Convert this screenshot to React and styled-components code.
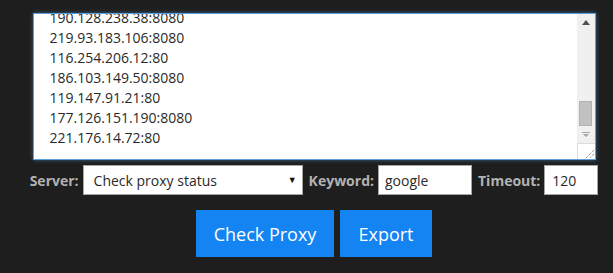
import React, { useLayoutEffect, useRef } from 'react'
import styled, { createGlobalStyle } from 'styled-components'

const GlobalStyle = createGlobalStyle`
html, body {
  margin: 0;
  padding: 0;
  background: #1e1e1e;
}
body {
  font-family: "Open Sans", "Liberation Sans", sans-serif;
}
`

const proxies = [
  '103.21.150.184:8080',
  '185.46.212.97:3128',
  '41.78.243.189:53281',
  '200.29.109.112:8080',
  '91.205.174.26:80',
  '118.99.102.33:8080',
  '94.177.246.23:3128',
  '5.189.133.231:80',
  '200.89.178.215:8080',
  '112.78.164.54:8080',
  '45.55.23.78:8080',
  '137.74.254.242:3128',
  '181.112.34.222:8080',
  '36.67.27.189:8080',
  '78.137.60.42:80',
  '201.16.140.91:8080',
  '62.210.77.120:3128',
  '104.131.60.5:80',
  '190.128.238.38:8080',
  '219.93.183.106:8080',
  '116.254.206.12:80',
  '186.103.149.50:8080',
  '119.147.91.21:80',
  '177.126.151.190:8080',
  '221.176.14.72:80',
]

const Page = styled.div`
  width: 613px;
  height: 273px;
  box-sizing: border-box;
  padding: 13px 0 0 15px;
  display: flex;
  flex-direction: column;
  align-items: center;
`

const Editor = styled.div`
  width: 563px;
  height: 147px;
  box-sizing: border-box;
  display: flex;
  background: #fff;
  border: 1px solid #5d9fd8;
  box-shadow: 0 0 4px rgba(82, 160, 230, 0.55);
`

const ListArea = styled.textarea`
  flex: 1;
  min-width: 0;
  height: 100%;
  box-sizing: border-box;
  margin: 0;
  border: none;
  outline: none;
  resize: none;
  padding: 0 16px 11px 16px;
  font-family: "Open Sans", "Liberation Sans", sans-serif;
  font-size: 14px;
  line-height: 20px;
  color: #2a2a2a;
  background: #fff;
  overflow: hidden;
  scrollbar-width: none;
  caret-color: #000;
`

const ScrollBar = styled.div`
  width: 18px;
  display: flex;
  flex-direction: column;
  background: #f0f0f0;
`

const ArrowButton = styled.div`
  height: 17px;
  display: flex;
  align-items: center;
  justify-content: center;
`

const Track = styled.div`
  flex: 1;
  display: flex;
  flex-direction: column;
  justify-content: flex-end;
  align-items: center;
`

const Thumb = styled.div`
  width: 11px;
  height: 23px;
  background: #c1c1c1;
  border: 1px solid #b3b3b3;
`

const Grip = styled.div`
  height: 16px;
  box-sizing: border-box;
  background: #fff;
  border-top: 1px solid #dcdcdc;
  border-left: 1px solid #dcdcdc;
  display: flex;
  align-items: flex-end;
  justify-content: flex-end;
`

const Controls = styled.div`
  margin-top: 5px;
  display: flex;
  align-items: center;
  justify-content: center;
  height: 30px;
`

const Label = styled.label`
  font-size: 14px;
  font-weight: 700;
  color: #b2b2b2;
  margin: 0 4px 0 ${p => p.$first ? 0 : 6}px;
  white-space: nowrap;
`

const SelectWrap = styled.div`
  position: relative;
  width: 220px;
  height: 30px;

  &::after {
    content: '▼';
    position: absolute;
    right: 6px;
    top: 8px;
    font-size: 9px;
    color: #111;
    pointer-events: none;
  }
`

const Select = styled.select`
  appearance: none;
  width: 100%;
  height: 100%;
  box-sizing: border-box;
  margin: 0;
  border: 1px solid #a6a6a6;
  border-radius: 0;
  background: #fff;
  padding: 0 0 0 10px;
  font-family: "Open Sans", "Liberation Sans", sans-serif;
  font-size: 14px;
  color: #2a2a2a;
  outline: none;
`

const Field = styled.input`
  width: ${p => p.$width}px;
  height: 30px;
  box-sizing: border-box;
  margin: 0;
  border: 1px solid #a6a6a6;
  border-radius: 0;
  padding: 0 0 0 ${p => p.$pad}px;
  font-family: "Open Sans", "Liberation Sans", sans-serif;
  font-size: 14px;
  color: #2a2a2a;
  background: #fff;
  outline: none;
`

const Buttons = styled.div`
  margin-top: 15px;
  display: flex;
  gap: 6px;
`

const Button = styled.button`
  width: ${p => p.$width}px;
  height: 47px;
  padding: 0;
  border: none;
  border-radius: 0;
  background: #1384f1;
  color: #fff;
  font-family: "Open Sans", "Liberation Sans", sans-serif;
  font-size: 18px;
  cursor: pointer;
`

function App () {
  const areaRef = useRef(null)

  useLayoutEffect(() => {
    const el = areaRef.current
    if (!el) return
    el.focus()
    const end = el.value.length
    el.setSelectionRange(end, end)
    el.scrollTop = el.scrollHeight
  }, [])

  return (
    <>
      <GlobalStyle />
      <Page>
        <Editor>
          <ListArea
            ref={areaRef}
            defaultValue={proxies.join('\n')}
            spellCheck={false} />
          <ScrollBar>
            <ArrowButton>
              <svg width="8" height="5" viewBox="0 0 8 5">
                <path d="M4 0 L8 5 L0 5 Z" fill="#505050" />
              </svg>
            </ArrowButton>
            <Track>
              <Thumb />
            </Track>
            <ArrowButton>
              <svg width="8" height="5" viewBox="0 0 8 5">
                <path d="M0 0 H8 V1 H0 Z M1 2 H7 L4 5 Z" fill="#a3a8a3" />
              </svg>
            </ArrowButton>
            <Grip>
              <svg width="11" height="11" viewBox="0 0 11 11">
                <path d="M10 2 L2 10 M10 6 L6 10" stroke="#6a6a6a" strokeWidth="1" strokeDasharray="1 1" />
              </svg>
            </Grip>
          </ScrollBar>
        </Editor>

        <Controls>
          <Label $first>Server:</Label>
          <SelectWrap>
            <Select defaultValue="status">
              <option value="status">Check proxy status</option>
              <option value="google">Google</option>
            </Select>
          </SelectWrap>
          <Label>Keyword:</Label>
          <Field $width={94} $pad={6} defaultValue="google" />
          <Label>Timeout:</Label>
          <Field $width={54} $pad={7} defaultValue="120" />
        </Controls>

        <Buttons>
          <Button $width={138}>Check Proxy</Button>
          <Button $width={92}>Export</Button>
        </Buttons>
      </Page>
    </>
  )
}

export default App
